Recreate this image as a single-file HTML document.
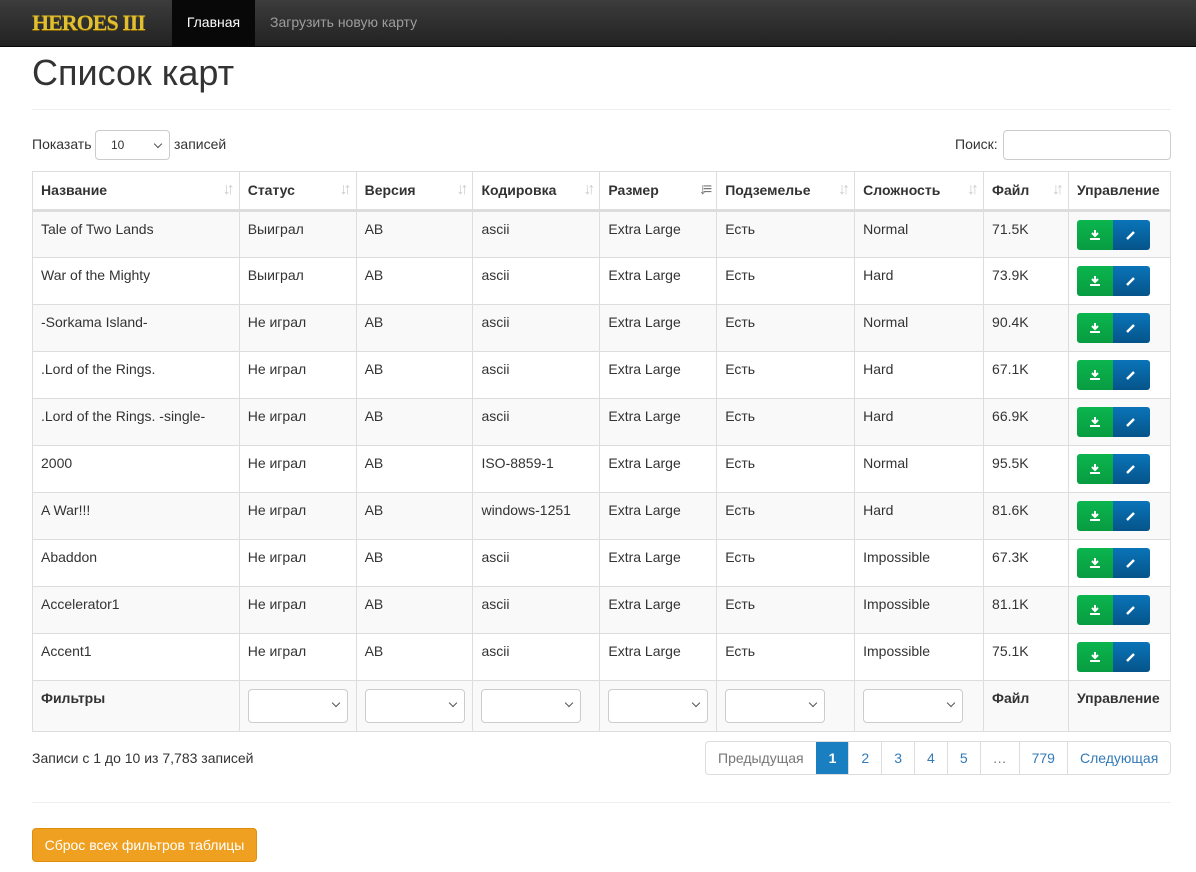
<!DOCTYPE html>
<html><head><meta charset="utf-8"><style>
*{box-sizing:border-box}
body{margin:0;font-family:"Liberation Sans",Arial,sans-serif;font-size:14px;color:#333;background:#fff;width:1196px;height:872px;overflow:hidden}
.nav{height:47px;background:linear-gradient(#3c3c3c,#222);border-bottom:1px solid #080808;position:relative}
.logo{position:absolute;left:32px;top:10px;font-family:"Liberation Serif",serif;font-weight:bold;font-size:22px;color:#e0c030;letter-spacing:-1px;text-shadow:0 1px 0 #806000}
.nav .act{position:absolute;left:172px;top:0;width:83px;height:47px;background:#080808;color:#fff;line-height:45px;text-align:center}
.nav .l2{position:absolute;left:270px;top:0;line-height:45px;color:#9d9d9d}
h1{position:absolute;left:32px;top:52px;margin:0;font-size:36px;font-weight:normal;color:#333}
.hr{position:absolute;left:32px;width:1139px;height:1px;background:#eee}
.sel{position:absolute;border:1px solid #ccc;border-radius:4px;background:#fff;height:30px}
.sel:after{content:"";position:absolute;right:8px;top:10px;width:5px;height:5px;border-right:1.5px solid #555;border-bottom:1.5px solid #555;transform:rotate(45deg)}
.sel.srch:after{display:none}
table{position:absolute;left:32px;top:171px;border-collapse:collapse;width:1139px}
td,th{border:1px solid #ddd;padding:0 8px;text-align:left;vertical-align:top;position:relative}
th{height:39px;border-bottom:3px solid #ddd;padding-top:10px;font-weight:bold}
td{height:47px;padding-top:9px}
tbody tr:nth-child(odd) td{background:#f9f9f9}
.s{position:absolute;right:8px;top:9px;color:#ccc;font-size:16px;letter-spacing:-4px;font-weight:bold}
.btn{position:absolute;left:8px;top:8px;width:73px;height:30px;border-radius:3px;overflow:hidden;display:flex}
.g{width:36px;background:linear-gradient(#0bb54e,#089c41);display:flex;align-items:center;justify-content:center}
.b{width:37px;background:linear-gradient(#0a74b8,#05548a);display:flex;align-items:center;justify-content:center}
.f td{height:51px;background:#fff}
.pg{position:absolute;top:741px;left:705px;display:flex;height:34px;border:1px solid #ddd;border-radius:4px;overflow:hidden}
.pg span{border-left:1px solid #ddd;line-height:32px;padding:0 12px;color:#337ab7}
.pg span:first-child{border-left:none;color:#777}
.pg .a{background:#1a7fc1;color:#fff;font-weight:bold;border-color:#1a7fc1}
.reset{position:absolute;left:32px;top:828px;width:225px;height:34px;background:#f0a020;border:1px solid #e08e0b;border-radius:4px;color:#fff;line-height:32px;text-align:center}
</style></head><body>
<div class="nav"><div class="logo">HEROES III</div><div class="act">Главная</div><div class="l2">Загрузить новую карту</div></div>
<h1>Список карт</h1>
<div class="hr" style="top:109px"></div>
<div style="position:absolute;left:32px;top:136px">Показать</div>
<div class="sel" style="left:95px;top:130px;width:75px"><span style="position:absolute;left:15px;top:7px;font-size:12px">10</span></div>
<div style="position:absolute;left:174px;top:136px">записей</div>
<div style="position:absolute;left:955px;top:136px">Поиск:</div>
<div class="sel srch" style="left:1003px;top:130px;width:168px"></div>
<table>
<colgroup><col style="width:207px"><col style="width:117px"><col style="width:117px"><col style="width:127px"><col style="width:117px"><col style="width:138px"><col style="width:129px"><col style="width:85px"><col style="width:102px"></colgroup>
<thead><tr><th>Название<span class="s">↓↑</span></th><th>Статус<span class="s">↓↑</span></th><th>Версия<span class="s">↓↑</span></th><th>Кодировка<span class="s">↓↑</span></th><th>Размер<span class="s" style="color:#777">↓≡</span></th><th>Подземелье<span class="s">↓↑</span></th><th>Сложность<span class="s">↓↑</span></th><th>Файл<span class="s">↓↑</span></th><th>Управление</th></tr></thead>
<tbody>
<tr><td>Tale of Two Lands</td><td>Выиграл</td><td>AB</td><td>ascii</td><td>Extra Large</td><td>Есть</td><td>Normal</td><td>71.5K</td><td><div class="btn"><div class="g"><svg width="12" height="12"><path d="M6 1v6M3 4l3 3 3-3M1 10h10" stroke="#fff" stroke-width="2" fill="none"/></svg></div><div class="b"><svg width="12" height="12"><path d="M2 10l7-7" stroke="#fff" stroke-width="2.5"/></svg></div></div></td></tr>
<tr><td>War of the Mighty</td><td>Выиграл</td><td>AB</td><td>ascii</td><td>Extra Large</td><td>Есть</td><td>Hard</td><td>73.9K</td><td><div class="btn"><div class="g"><svg width="12" height="12"><path d="M6 1v6M3 4l3 3 3-3M1 10h10" stroke="#fff" stroke-width="2" fill="none"/></svg></div><div class="b"><svg width="12" height="12"><path d="M2 10l7-7" stroke="#fff" stroke-width="2.5"/></svg></div></div></td></tr>
<tr><td>-Sorkama Island-</td><td>Не играл</td><td>AB</td><td>ascii</td><td>Extra Large</td><td>Есть</td><td>Normal</td><td>90.4K</td><td><div class="btn"><div class="g"><svg width="12" height="12"><path d="M6 1v6M3 4l3 3 3-3M1 10h10" stroke="#fff" stroke-width="2" fill="none"/></svg></div><div class="b"><svg width="12" height="12"><path d="M2 10l7-7" stroke="#fff" stroke-width="2.5"/></svg></div></div></td></tr>
<tr><td>.Lord of the Rings.</td><td>Не играл</td><td>AB</td><td>ascii</td><td>Extra Large</td><td>Есть</td><td>Hard</td><td>67.1K</td><td><div class="btn"><div class="g"><svg width="12" height="12"><path d="M6 1v6M3 4l3 3 3-3M1 10h10" stroke="#fff" stroke-width="2" fill="none"/></svg></div><div class="b"><svg width="12" height="12"><path d="M2 10l7-7" stroke="#fff" stroke-width="2.5"/></svg></div></div></td></tr>
<tr><td>.Lord of the Rings. -single-</td><td>Не играл</td><td>AB</td><td>ascii</td><td>Extra Large</td><td>Есть</td><td>Hard</td><td>66.9K</td><td><div class="btn"><div class="g"><svg width="12" height="12"><path d="M6 1v6M3 4l3 3 3-3M1 10h10" stroke="#fff" stroke-width="2" fill="none"/></svg></div><div class="b"><svg width="12" height="12"><path d="M2 10l7-7" stroke="#fff" stroke-width="2.5"/></svg></div></div></td></tr>
<tr><td>2000</td><td>Не играл</td><td>AB</td><td>ISO-8859-1</td><td>Extra Large</td><td>Есть</td><td>Normal</td><td>95.5K</td><td><div class="btn"><div class="g"><svg width="12" height="12"><path d="M6 1v6M3 4l3 3 3-3M1 10h10" stroke="#fff" stroke-width="2" fill="none"/></svg></div><div class="b"><svg width="12" height="12"><path d="M2 10l7-7" stroke="#fff" stroke-width="2.5"/></svg></div></div></td></tr>
<tr><td>A War!!!</td><td>Не играл</td><td>AB</td><td>windows-1251</td><td>Extra Large</td><td>Есть</td><td>Hard</td><td>81.6K</td><td><div class="btn"><div class="g"><svg width="12" height="12"><path d="M6 1v6M3 4l3 3 3-3M1 10h10" stroke="#fff" stroke-width="2" fill="none"/></svg></div><div class="b"><svg width="12" height="12"><path d="M2 10l7-7" stroke="#fff" stroke-width="2.5"/></svg></div></div></td></tr>
<tr><td>Abaddon</td><td>Не играл</td><td>AB</td><td>ascii</td><td>Extra Large</td><td>Есть</td><td>Impossible</td><td>67.3K</td><td><div class="btn"><div class="g"><svg width="12" height="12"><path d="M6 1v6M3 4l3 3 3-3M1 10h10" stroke="#fff" stroke-width="2" fill="none"/></svg></div><div class="b"><svg width="12" height="12"><path d="M2 10l7-7" stroke="#fff" stroke-width="2.5"/></svg></div></div></td></tr>
<tr><td>Accelerator1</td><td>Не играл</td><td>AB</td><td>ascii</td><td>Extra Large</td><td>Есть</td><td>Impossible</td><td>81.1K</td><td><div class="btn"><div class="g"><svg width="12" height="12"><path d="M6 1v6M3 4l3 3 3-3M1 10h10" stroke="#fff" stroke-width="2" fill="none"/></svg></div><div class="b"><svg width="12" height="12"><path d="M2 10l7-7" stroke="#fff" stroke-width="2.5"/></svg></div></div></td></tr>
<tr><td>Accent1</td><td>Не играл</td><td>AB</td><td>ascii</td><td>Extra Large</td><td>Есть</td><td>Impossible</td><td>75.1K</td><td><div class="btn"><div class="g"><svg width="12" height="12"><path d="M6 1v6M3 4l3 3 3-3M1 10h10" stroke="#fff" stroke-width="2" fill="none"/></svg></div><div class="b"><svg width="12" height="12"><path d="M2 10l7-7" stroke="#fff" stroke-width="2.5"/></svg></div></div></td></tr>
<tr class="f"><td><b>Фильтры</b></td><td><div class="sel" style="left:8px;top:8px;width:100px;height:34px"></div></td><td><div class="sel" style="left:8px;top:8px;width:100px;height:34px"></div></td><td><div class="sel" style="left:8px;top:8px;width:100px;height:34px"></div></td><td><div class="sel" style="left:8px;top:8px;width:100px;height:34px"></div></td><td><div class="sel" style="left:8px;top:8px;width:100px;height:34px"></div></td><td><div class="sel" style="left:8px;top:8px;width:100px;height:34px"></div></td><td><b>Файл</b></td><td><b>Управление</b></td></tr>
</tbody></table>
<div style="position:absolute;left:32px;top:750px">Записи с 1 до 10 из 7,783 записей</div>
<div class="pg"><span>Предыдущая</span><span class="a">1</span><span>2</span><span>3</span><span>4</span><span>5</span><span style="color:#777">…</span><span>779</span><span>Следующая</span></div>
<div class="hr" style="top:802px"></div>
<div class="reset">Сброс всех фильтров таблицы</div>
</body></html>
